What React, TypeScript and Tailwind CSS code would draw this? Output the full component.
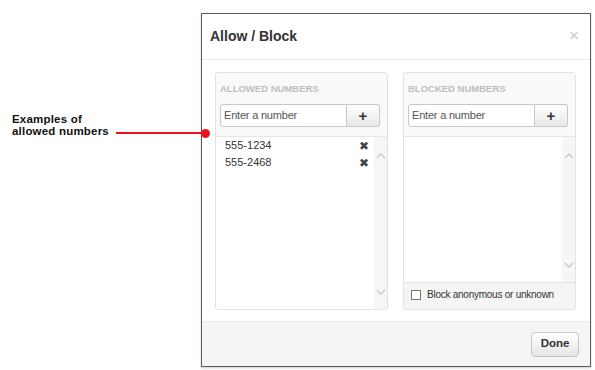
import React from 'react';

const ChevronUp = () => (
  <svg width="10" height="6" viewBox="0 0 10 6" fill="none">
    <polyline points="1,5 5,1 9,5" stroke="#c8c8c8" strokeWidth="1.3" />
  </svg>
);

const ChevronDown = () => (
  <svg width="10" height="6" viewBox="0 0 10 6" fill="none">
    <polyline points="1,1 5,5 9,1" stroke="#c8c8c8" strokeWidth="1.3" />
  </svg>
);

const NumberInput = () => (
  <div className="flex h-[23px]">
    <div className="w-[127px] h-full border border-[#c8c8c8] rounded-l-[3px] bg-white flex items-center pl-[3px] text-[11px] tracking-[-0.2px] text-[#555]">
      Enter a number
    </div>
    <button className="w-[33px] h-full border border-l-0 border-[#c8c8c8] rounded-r-[3px] bg-gradient-to-b from-white to-[#e8e8e8] flex items-center justify-center text-[15px] font-bold text-[#333] leading-none">
      +
    </button>
  </div>
);

interface PanelProps {
  title: string;
  items: string[];
  footer?: boolean;
}

const Panel: React.FC<PanelProps> = ({ title, items, footer }) => (
  <div className="w-[173px] border border-[#e3e3e3] rounded-[3px] flex flex-col overflow-hidden">
    <div className="bg-[#f9f9f9] pt-[10px] pl-[4px] pb-[9px] border-b border-[#e6e6e6]">
      <div className="h-[12px] leading-[12px] text-[9.5px] font-bold text-[#bdbdbd] mb-[9px]">{title}</div>
      <NumberInput />
    </div>
    <div className="flex-1 flex bg-white">
      <div className="flex-1">
        {items.map((n) => (
          <div key={n} className="h-[17px] flex items-center justify-between pl-[9px] pr-[5px] text-[11px] text-[#333]">
            <span>{n}</span>
            <span className="text-[12px] text-[#444] leading-none">✖</span>
          </div>
        ))}
      </div>
      <div className="w-[13px] bg-[#f6f6f6] flex flex-col items-center justify-between pt-[16px] pb-[14px]">
        <ChevronUp />
        <ChevronDown />
      </div>
    </div>
    {footer && (
      <div className="h-[27px] border-t border-[#e3e3e3] bg-[#f5f5f5] flex items-center pl-[7px] pb-[3px] gap-[6px]">
        <div className="w-[10px] h-[10px] border border-[#777] bg-white" />
        <span className="text-[10px] tracking-[-0.25px] text-[#333]">Block anonymous or unknown</span>
      </div>
    )}
  </div>
);

export default function App() {
  return (
    <div className="relative w-[595px] h-[370px] bg-white overflow-hidden" style={{ fontFamily: '"Liberation Sans", Arial, sans-serif' }}>
      <div className="absolute left-[12px] top-[113px] text-[11.5px] leading-[12px] font-bold text-[#111] tracking-[0.2px]">
        <div>Examples of</div>
        <div>allowed numbers</div>
      </div>
      <div className="absolute left-[116px] top-[132px] w-[88px] h-[2px] bg-[#e8141a]" />
      <div className="absolute left-[201px] top-[129px] w-[9px] h-[9px] rounded-full bg-[#e8141a] z-10" />

      <div className="ml-[201px] mt-[13px] w-[390px] h-[354px] border border-[#5c5c5c] bg-white flex flex-col shadow-[0_1px_2px_rgba(0,0,0,0.2)]">
        <div className="h-[46px] border-b border-[#ececec] flex items-center justify-between pl-[8px] pr-[11px]">
          <span className="text-[14px] font-bold text-[#333]">Allow / Block</span>
          <span className="text-[17px] text-[#c8c8c8] leading-none pb-[3px]">×</span>
        </div>
        <div className="flex-1 flex gap-[15px] pl-[13px] pt-[12px] pb-[11px]">
          <Panel title="ALLOWED NUMBERS" items={['555-1234', '555-2468']} />
          <Panel title="BLOCKED NUMBERS" items={[]} footer />
        </div>
        <div className="h-[45px] border-t border-[#ebebeb] bg-[#f5f5f5] flex items-center justify-end pr-[11px]">
          <button className="w-[48px] h-[25px] border border-[#c8c8c8] rounded-[4px] bg-gradient-to-b from-white to-[#e6e6e6] text-[11.5px] font-bold text-[#333]">
            Done
          </button>
        </div>
      </div>
    </div>
  );
}
